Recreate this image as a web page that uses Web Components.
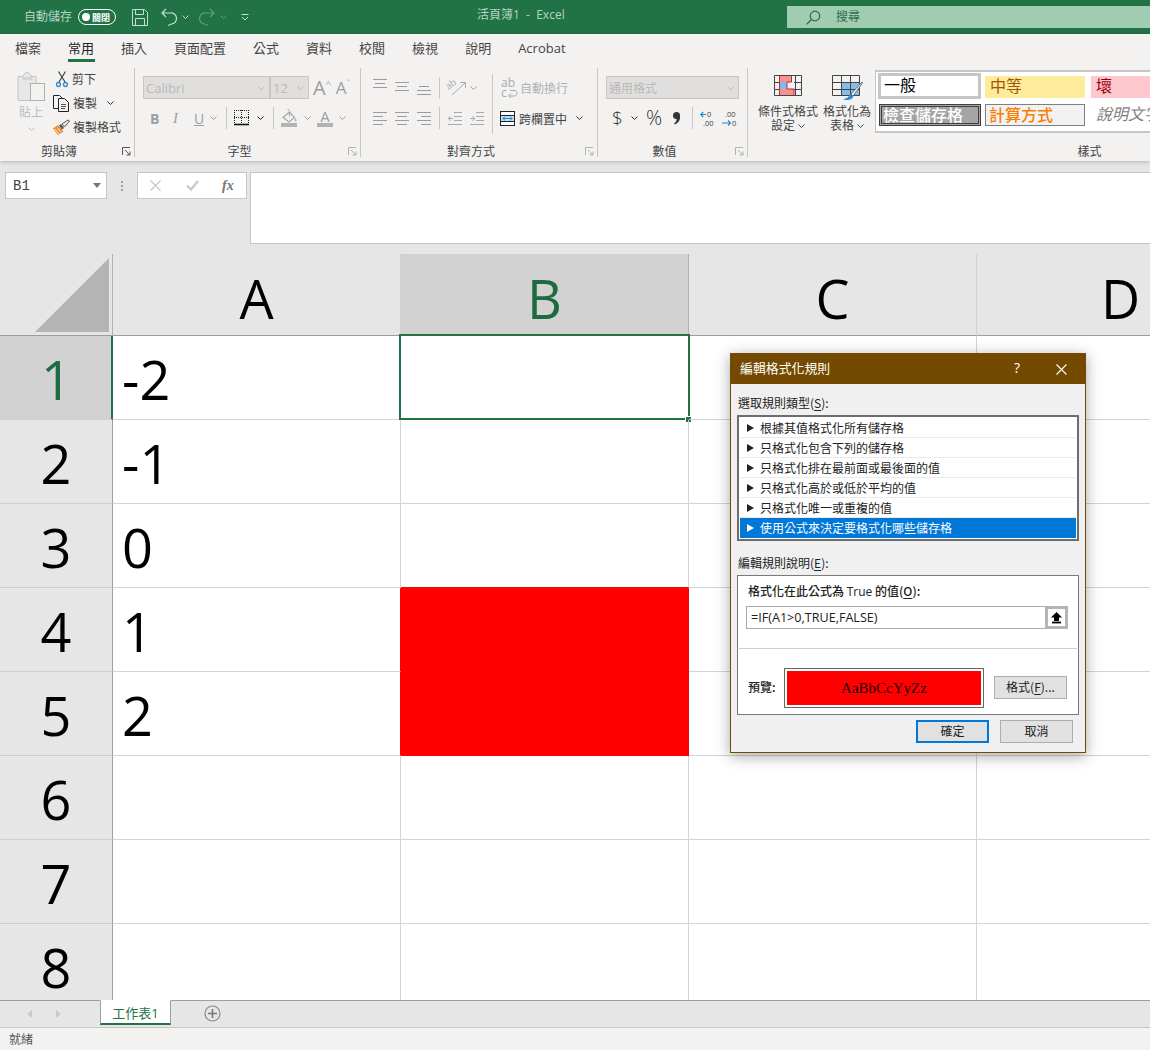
<!DOCTYPE html>
<html lang="zh-Hant">
<head>
<meta charset="utf-8">
<title>活頁簿1 - Excel</title>
<style>
  html, body { margin: 0; height: 100%; overflow: hidden; }
  body {
    width: 1150px;
    height: 1050px;
    display: flex;
    flex-direction: column;
    position: relative;
    font-family: "Open Sans", "Noto Sans CJK TC", sans-serif;
    font-size: 12px;
  }
</style>
</head>
<body>
<xl-titlebar></xl-titlebar>
<xl-ribbon></xl-ribbon>
<xl-formula-bar></xl-formula-bar>
<xl-sheet></xl-sheet>
<xl-sheet-tabs></xl-sheet-tabs>
<xl-status>就緒</xl-status>
<xl-rule-dialog></xl-rule-dialog>

<script>
const lines = (rows, color) =>
  rows.map(([x, y, w]) => `<path d="M${x} ${y}.5h${w}" stroke="${color}"/>`).join("");

const ICONS = {
  chev: [7, 4, `<path d="M.5.5l3 3 3-3" fill="none" stroke="currentColor"/>`],
  save: [16, 17, `<path d="M.5.5h12l3 3v13H.5zM3.5.5v5h8v-5M3.5 16.5v-7h9v7" fill="none" stroke="currentColor"/>`],
  undo: [16, 18, `<path d="M5 1L1 5l4 4M1 5h8.500a5.500 5.500 0 0 1 1 11L7 17.500" fill="none" stroke="currentColor" stroke-width="1.200"/>`],
  redo: [16, 18, `<path d="M11 1l4 4-4 4M15 5H6.500a5.500 5.500 0 0 0-1 11L9 17.500" fill="none" stroke="currentColor" stroke-width="1.200"/>`],
  custom: [8, 7, `<path d="M.5.500h7M1 3l3 3 3-3" fill="none" stroke="currentColor"/>`],
  search: [15, 15, `<circle cx="9" cy="6" r="4.800" fill="none" stroke="currentColor" stroke-width="1.200"/><path d="M5.500 9.500L.7 14.300" stroke="currentColor" stroke-width="1.300"/>`],
  paste: [28, 31, `<path d="M1 5.500h5l1-2.500 3-2 3 2 1 2.500h5v24H1z" fill="#e8e7e6" stroke="#c4c4c4"/><rect x="5.500" y="6" width="10" height="3" fill="#d4d4d4"/><rect x="13.500" y="12.500" width="14" height="17" fill="#f3f2f1" stroke="#b0b0b0"/>`],
  cut: [12, 17, `<path d="M3 11L9.500.5M9 11L2.500.5" stroke="#333" stroke-width="1.100" fill="none"/><circle cx="2.500" cy="13.500" r="2" fill="none" stroke="#2b88d8" stroke-width="1.300"/><circle cx="9.500" cy="13.500" r="2" fill="none" stroke="#2b88d8" stroke-width="1.300"/>`],
  copy: [17, 17, `<path d="M5.500 13.500H.5V.5h6l3 3" fill="none" stroke="#222"/><path d="M5.500 3.500h6l4 4v9h-10z" fill="#f3f2f1" stroke="#222"/><path d="M8 9.500h5M8 11.500h5M8 13.500h4" stroke="#555"/>`],
  brush: [17, 15, `<path d="M0 8.500l5 6.500 5.500-3.500L5 5z" fill="#ed8b2b"/><path d="M2 9l4 5M4.500 7.500l3 4.500" stroke="#fff" stroke-width=".8"/><path d="M6 5.500l3 4 2-1.500-3-4z" fill="#555"/><path d="M9 4l2.500 3 5-6L15 0z" fill="#f3f2f1" stroke="#444" stroke-width=".9"/>`],
  launcher: [9, 9, `<path d="M.5 8V.5H8M3 3l5 5M8 4.500V8H4.500" fill="none" stroke="currentColor"/>`],
  borders: [15, 17, `<path d="M0 .500h15M0 7.500h15M.5 0v14M14.500 0v14M7.500 0v14" stroke="#222" stroke-dasharray="1 1" fill="none"/><path d="M0 14.500h15" stroke="#111" stroke-width="1.600"/>`],
  fill: [17, 18, `<path d="M2 8.500l6.500-5.500 5 5.500-5.500 4.500z" fill="#f3f2f1" stroke="#a6a6a6" stroke-width="1.200"/><path d="M6.500.5c1-.5 2 .5 2 2v5" fill="none" stroke="#a6a6a6"/><path d="M14.500 9c1 1.500 1.500 2.500.5 3.200s-1.800-1.700-.5-3.200z" fill="#a6a6a6"/><rect y="14" width="16" height="4" fill="#b4b2b0"/>`],
  at1: [14, 10, lines([[0,0,14],[2,4,10],[0,8,14]], "#9c9c9c")],
  at2: [14, 10, lines([[0,0,14],[2,4,10],[0,8,14]], "#9c9c9c")],
  at3: [14, 10, lines([[2,0,10],[0,4,14],[0,8,14]], "#9c9c9c")],
  al: [14, 13, lines([[0,0,14],[0,4,10],[0,8,14],[0,12,10]], "#9c9c9c")],
  ac: [14, 13, lines([[0,0,14],[2,4,10],[0,8,14],[2,12,10]], "#9c9c9c")],
  ar: [14, 13, lines([[0,0,14],[4,4,10],[0,8,14],[4,12,10]], "#9c9c9c")],
  orient: [20, 17, `<text x="0" y="9" font-size="9.500" fill="#aaa" transform="rotate(-38 4 8)" font-family="Open Sans">ab</text><path d="M5 16L18 4M13 3.500h5.500V9" fill="none" stroke="#aaa"/>`],
  indL: [14, 13, lines([[6,0,8],[6,4,8],[6,8,8],[0,12,14]], "#aaa") + `<path d="M5 6.500H0M2.500 4L.5 6.500 2.500 9" fill="none" stroke="#aaa"/>`],
  indR: [14, 13, lines([[6,0,8],[6,4,8],[6,8,8],[0,12,14]], "#aaa") + `<path d="M0 6.500h5M2.500 4l2 2.500-2 2.500" fill="none" stroke="#aaa"/>`],
  wrap: [17, 20, `<text x="0" y="9" font-size="12" fill="#aaa" font-family="Open Sans">ab</text><text x="0" y="19" font-size="12" fill="#aaa" font-family="Open Sans">c</text><path d="M9 12.500h5c2.800 0 2.800 5.500-1 5.500H8M10 15.500L7.500 18l2.500 2" fill="none" stroke="#aaa"/>`],
  merge: [15, 15, `<rect x=".5" y=".5" width="14" height="14" fill="#fff" stroke="#222"/><rect x="1" y="4" width="13" height="7" fill="#bfe0f5"/><path d="M0 4.500h15M0 10.500h15" stroke="#222"/><path d="M3 7.500h9M5 5.500l-2 2 2 2M10 5.500l2 2-2 2" fill="none" stroke="#1e88d2"/>`],
  comma: [9, 13, `<circle cx="4.500" cy="3.500" r="3.500" fill="#333"/><path d="M8 4c.5 4-2 7.500-5.500 8.500l-.5-1c2-1 3-3 2.500-6z" fill="#333"/>`],
  decL: [15, 17, `<text x="7" y="7" font-size="7.500" fill="#444" font-family="Open Sans">0</text><text x="3" y="16" font-size="7.500" fill="#444" font-family="Open Sans">.00</text><path d="M6 4.500H.8M3.200 2L.8 4.500 3.200 7" fill="none" stroke="#1e88d2" stroke-width="1.100"/>`],
  decR: [15, 17, `<text x="3" y="7" font-size="7.500" fill="#444" font-family="Open Sans">.00</text><text x="10" y="16" font-size="7.500" fill="#444" font-family="Open Sans">0</text><path d="M0 13h8.500M6 10.500L8.500 13 6 15.500" fill="none" stroke="#1e88d2" stroke-width="1.100"/>`],
  cond: [28, 21, `<rect x="5" y="0" width="13" height="7" fill="#f98f92"/><rect x="5" y="7" width="8" height="7" fill="#7fbae8"/><rect x="5" y="14" width="15" height="7" fill="#f98f92"/><path d="M5.500.5h12v6.500h-4.500v7h7v6.500h-14.500z" fill="none" stroke="#c8282d"/><path d="M.5.500h27v20H.5zM.5 7.500h5M.5 14.500h5M20 7.500h8M20 14.500h8M21.500.500v20" fill="none" stroke="#444"/>`],
  table: [31, 26, `<rect x="9" y="7" width="19" height="14" fill="#84bde8"/><path d="M.5.500h27v20H.5zM.5 7.500h27M.5 14.500h27M9.500.500v20M18.500.500v20" fill="none" stroke="#444"/><path d="M30 7L19 19l2 2L30.500 8z" fill="#f3f2f1" stroke="#555" stroke-width=".8"/><path d="M18.500 19.500c-2 .5-1.500 3-4 3.500-1 .5-2 1-3.500 1 2.500 1.500 9 2 10.500-3z" fill="#2e8bd8"/>`],
  cross: [11, 11, `<path d="M.5.500l10 10M10.500.500l-10 10" stroke="#c8c8c8" stroke-width="1.300"/>`],
  check: [13, 11, `<path d="M1 5.500L5 9.500 12 1" fill="none" stroke="#c8c8c8" stroke-width="2.200"/>`],
  close: [11, 11, `<path d="M.5.500l10 10M10.500.500l-10 10" stroke="#fff" stroke-width="1.100"/>`],
  plus: [17, 17, `<circle cx="8.500" cy="8.500" r="7.500" fill="none" stroke="#8a8a8a" stroke-width="1.200"/><path d="M4 8.500h9M8.500 4v9" stroke="#777" stroke-width="1.600"/>`],
  up: [13, 13, `<path d="M6.500 1L12 6.500H9V10H4V6.500H1z" fill="#000"/><path d="M2 11.500h9" stroke="#000" stroke-width="1.800"/>`],
};

class XlIcon extends HTMLElement {
  constructor() {
    super();
    this.attachShadow({ mode: "open" });
  }
  connectedCallback() {
    const [w, h, body] = ICONS[this.getAttribute("name")];
    this.shadowRoot.innerHTML = `
      <style>:host{display:inline-flex;flex:none} svg{display:block;overflow:visible}</style>
      <svg width="${w}" height="${h}" viewBox="0 0 ${w} ${h}">${body}</svg>`;
  }
}
customElements.define("xl-icon", XlIcon);

class XlTitlebar extends HTMLElement {
  constructor() {
    super();
    this.attachShadow({ mode: "open" }).innerHTML = `
      <style>
        :host { display: flex; flex: none; align-items: center; height: 34px; background: #217346; color: #b3d5c2; font-family: "Noto Sans CJK TC", sans-serif; font-size: 12px; padding-left: 24px; box-sizing: border-box; overflow: hidden; }
        .auto { width: 48px; white-space: nowrap; margin-top: -4px; }
        .sw { display: flex; align-items: center; box-sizing: border-box; width: 38px; height: 16px; margin-left: 6px; border: 1px solid #fff; border-radius: 8px; color: #fff; font-size: 9px; font-weight: 700; padding-left: 3px; gap: 2px; line-height: 1; }
        .dot { width: 8px; height: 8px; border-radius: 50%; background: #fff; }
        .ic { color: #c4e0d0; display: flex; }
        .dim { color: #5f9e7e; }
        .title { position: absolute; left: 477px; top: 8px; line-height: 14px; white-space: nowrap; font-family: "Open Sans", "Noto Sans CJK TC", sans-serif; font-size: 12px; }
        .search { display: flex; align-items: center; margin-left: auto; width: 363px; height: 22px; background: #a0ccb2; color: #2d6e4c; box-sizing: border-box; padding-left: 19px; gap: 15px; }
        .search span { margin-top: -4px; }
      </style>
      <span class="auto">自動儲存</span>
      <span class="sw"><span class="dot"></span>關閉</span>
      <xl-icon class="ic" name="save" style="margin-left:16px"></xl-icon>
      <xl-icon class="ic" name="undo" style="margin-left:13px"></xl-icon>
      <xl-icon class="ic" name="chev" style="margin-left:5px"></xl-icon>
      <xl-icon class="ic dim" name="redo" style="margin-left:10px"></xl-icon>
      <xl-icon class="ic dim" name="chev" style="margin-left:5px"></xl-icon>
      <xl-icon class="ic" name="custom" style="margin-left:14px"></xl-icon>
      <span class="title">活頁簿1&nbsp; -&nbsp; Excel</span>
      <div class="search"><xl-icon name="search"></xl-icon><span>搜尋</span></div>`;
  }
}
customElements.define("xl-titlebar", XlTitlebar);

class XlGroup extends HTMLElement {
  constructor() {
    super();
    this.attachShadow({ mode: "open" });
  }
  connectedCallback() {
    const hasLauncher = this.hasAttribute("launcher");
    const launcher = hasLauncher
      ? `<xl-icon class="lc" name="launcher" style="color:${this.getAttribute("launcher")}"></xl-icon>` : "";
    this.shadowRoot.innerHTML = `
      <style>
        :host { display: flex; flex-direction: column; flex: none; position: relative; box-sizing: border-box; height: 89px; width: ${this.getAttribute("w")}px; border-right: 1px solid #c8c6c4; }
        .body { flex: 1; min-height: 0; }
        .label { height: 14px; line-height: 14px; margin-bottom: -2px; padding-right: ${hasLauncher ? 16 : 0}px; text-align: center; color: #444; font-size: 12px; }
        .lc { position: absolute; right: 3px; bottom: 1px; }
      </style>
      <div class="body"><slot></slot></div>
      <div class="label">${this.getAttribute("label")}</div>
      ${launcher}`;
  }
}
customElements.define("xl-group", XlGroup);

class XlRibbon extends HTMLElement {
  constructor() {
    super();
    this.attachShadow({ mode: "open" }).innerHTML = `
      <style>
        :host { display: block; flex: none; position: relative; z-index: 1; height: 127px; background: #f3f2f1; color: #444; box-shadow: 0 1px 4px rgba(0,0,0,.22); font-family: "Open Sans", "Noto Sans CJK TC", sans-serif; font-size: 12px; overflow: hidden; }
        .tabs { display: flex; gap: 27px; height: 32px; padding: 6px 0 0 15px; box-sizing: border-box; font-size: 13px; }
        .tab { position: relative; line-height: 17px; white-space: nowrap; }
        .tab.on { color: #222; }
        .tab.on::after { content: ""; position: absolute; left: 0; right: -1px; top: 19px; height: 3px; background: #217346; }
        .groups { display: flex; margin-top: 2px; }
        .row { display: flex; align-items: center; white-space: nowrap; }
        .off { color: #b1b1b1; }
        .lite { color: #9e9e9e; }
        .clip { display: flex; padding-left: 17px; margin-top: 3px; }
        .paste { display: flex; flex-direction: column; align-items: center; width: 28px; color: #bdbdbd; }
        .paste span { margin-top: 2px; line-height: 17px; font-size: 12px; }
        .paste xl-icon:last-child { margin-top: 6px; }
        .mini { margin: -4px 0 0 8px; }
        .mini .row { height: 24px; gap: 3px; }
        .box { box-sizing: border-box; display: flex; align-items: center; justify-content: space-between; height: 23px; background: #e1dfdd; border: 1px solid #c8c6c4; color: #b9b9b9; padding: 0 4px 0 2px; font-size: 13px; }
        .sep { flex: none; width: 1px; background: #c8c6c4; height: 22px; }
        .r1 { margin-top: 8px; height: 23px; }
        .r2 { margin-top: 8px; height: 22px; }
        .blk { display: flex; flex-direction: column; width: 131px; }
        .tall { height: 60px; margin-top: 6px; }
        .style-wrap { display: flex; height: 100%; }
        .cmd { display: flex; flex-direction: column; align-items: center; flex: none; line-height: 14px; text-align: center; white-space: nowrap; color: #444; }
        .cmd > xl-icon { margin-top: 7px; }
        .gal { flex: none; box-sizing: border-box; margin-top: 2px; height: 63px; width: 420px; background: #fff; border: 1px solid #c8c6c4; border-width: 2px 2px 2px 1px; padding: 1px 0 0 2px; display: grid; grid-template-columns: 103px 100px 100px; grid-template-rows: 26px 22px; gap: 5px 4px; font-family: "Noto Sans CJK TC", sans-serif; font-size: 16px; }
        .c { box-sizing: border-box; display: flex; align-items: center; padding: 0 0 4px 5px; line-height: 1; white-space: nowrap; }
      </style>
      <div class="tabs">
        <span class="tab">檔案</span><span class="tab on">常用</span><span class="tab">插入</span><span class="tab">頁面配置</span><span class="tab">公式</span><span class="tab">資料</span><span class="tab">校閱</span><span class="tab">檢視</span><span class="tab">說明</span><span class="tab">Acrobat</span>
      </div>
      <div class="groups">
        <xl-group w="135" label="剪貼簿" launcher="#555">
          <div class="clip">
            <div class="paste">
              <xl-icon name="paste"></xl-icon><span>貼上</span><xl-icon name="chev"></xl-icon>
            </div>
            <div class="mini">
              <div class="row"><xl-icon name="cut" style="margin-left:3px"></xl-icon><span style="margin-left:1px">剪下</span></div>
              <div class="row"><xl-icon name="copy"></xl-icon><span>複製</span><xl-icon name="chev" style="margin-left:7px;color:#333"></xl-icon></div>
              <div class="row"><xl-icon name="brush"></xl-icon><span>複製格式</span></div>
            </div>
          </div>
        </xl-group>

        <xl-group w="226" label="字型" launcher="#b1b1b1">
          <div class="row r1" style="padding-left:8px">
            <div class="box" style="width:127px;font-family:'Open Sans',sans-serif">Calibri<xl-icon name="chev"></xl-icon></div>
            <div class="box" style="width:39px;font-family:'Open Sans',sans-serif">12<xl-icon name="chev"></xl-icon></div>
            <span class="lite" style="margin-left:4px;font-size:20px">A</span><span class="lite" style="font-size:9px;margin:-8px 0 0 0">^</span>
            <span class="lite" style="margin-left:5px;font-size:17px">A</span><span class="lite" style="font-size:9px;margin:-8px 0 0 0">ˇ</span>
          </div>
          <div class="row r2 lite">
            <b style="margin-left:15px;width:11px;font-size:14px;font-family:'Open Sans',sans-serif">B</b>
            <i style="margin-left:12px;width:8px;font-size:15px;font-family:'Liberation Serif',serif">I</i>
            <u style="margin-left:13px;width:10px;font-size:14px">U</u>
            <xl-icon name="chev" style="margin-left:6px"></xl-icon>
            <div class="sep" style="margin-left:9px"></div>
            <xl-icon name="borders" style="margin-left:7px"></xl-icon>
            <xl-icon name="chev" style="margin-left:8px;color:#222"></xl-icon>
            <div class="sep" style="margin-left:9px"></div>
            <xl-icon name="fill" style="margin-left:7px"></xl-icon>
            <xl-icon name="chev" style="margin-left:6px"></xl-icon>
            <span style="margin-left:6px;width:16px;display:flex;flex-direction:column;align-items:center;line-height:14px;font-size:15px">A<span style="display:block;width:16px;height:4px;background:#b4b2b0"></span></span>
            <xl-icon name="chev" style="margin-left:6px"></xl-icon>
          </div>
        </xl-group>

        <xl-group w="237" label="對齊方式" launcher="#b1b1b1">
          <div class="row" style="align-items:flex-start">
            <div class="blk">
              <div class="row r1" style="padding-left:12px">
                <xl-icon name="at1" style="margin-top:-8px"></xl-icon>
                <xl-icon name="at2" style="margin:-2px 0 0 8px"></xl-icon>
                <xl-icon name="at3" style="margin:6px 0 0 8px"></xl-icon>
                <div class="sep" style="margin-left:8px"></div>
                <xl-icon name="orient" style="margin-left:7px"></xl-icon>
                <xl-icon name="chev" class="lite" style="margin-left:3px"></xl-icon>
              </div>
              <div class="row r2" style="padding-left:12px">
                <xl-icon name="al"></xl-icon>
                <xl-icon name="ac" style="margin-left:8px"></xl-icon>
                <xl-icon name="ar" style="margin-left:8px"></xl-icon>
                <div class="sep" style="margin-left:8px"></div>
                <xl-icon name="indL" style="margin-left:8px"></xl-icon>
                <xl-icon name="indR" style="margin-left:8px"></xl-icon>
              </div>
            </div>
            <div class="sep tall"></div>
            <div class="blk" style="width:100px">
              <div class="row r1 off" style="padding-left:8px">
                <xl-icon name="wrap"></xl-icon><span style="margin-left:2px">自動換行</span>
              </div>
              <div class="row r2" style="padding-left:7px">
                <xl-icon name="merge"></xl-icon><span style="margin:0 0 -1px 4px">跨欄置中</span>
                <xl-icon name="chev" style="margin-left:9px;color:#333"></xl-icon>
              </div>
            </div>
          </div>
        </xl-group>

        <xl-group w="150" label="數值" launcher="#b1b1b1">
          <div class="row r1" style="padding-left:8px">
            <div class="box" style="width:133px;font-size:12px">通用格式<xl-icon name="chev"></xl-icon></div>
          </div>
          <div class="row r2" style="color:#333">
            <span style="margin-left:14px;width:11px;font-size:19px;font-weight:300;line-height:22px">$</span>
            <xl-icon name="chev" style="margin-left:8px"></xl-icon>
            <span style="margin-left:8px;width:18px;font-size:20px;font-weight:300;line-height:22px">%</span>
            <xl-icon name="comma" style="margin-left:8px"></xl-icon>
            <div class="sep" style="margin-left:11px"></div>
            <xl-icon name="decL" style="margin-left:7px"></xl-icon>
            <xl-icon name="decR" style="margin-left:7px"></xl-icon>
          </div>
        </xl-group>

        <xl-group w="684" label="樣式">
          <div class="style-wrap">
            <div class="cmd" style="width:74px;margin-left:3px">
              <xl-icon name="cond"></xl-icon>
              <span style="margin-top:9px">條件式格式</span>
              <span class="row" style="gap:3px">設定<xl-icon name="chev"></xl-icon></span>
            </div>
            <div class="cmd" style="width:50px;margin:0 3px 0 -3px">
              <xl-icon name="table"></xl-icon>
              <span style="margin-top:4px">格式化為</span>
              <span class="row" style="gap:3px">表格<xl-icon name="chev"></xl-icon></span>
            </div>
            <div class="gal">
              <div class="c" style="border:3px solid #c6c6c6;padding:0 0 4px 3px;color:#000">一般</div>
              <div class="c" style="margin-top:3px;height:22px;background:#ffeb9c;color:#9c5700">中等</div>
              <div class="c" style="margin:3px 0 0 2px;height:22px;background:#ffc7ce;color:#9c0006">壞</div>
              <div class="c" style="margin-left:1px;background:#a5a5a5;color:#fff;border:3px double #3f3f3f;padding:0 0 2px 1px;font-weight:500">檢查儲存格</div>
              <div class="c" style="background:#f2f2f2;color:#fa7d00;border:1px solid #7f7f7f;padding:0 0 2px 3px;font-weight:500">計算方式</div>
              <div class="c" style="color:#7f7f7f;font-style:italic;margin-left:2px">說明文字</div>
            </div>
          </div>
        </xl-group>
      </div>`;
  }
}
customElements.define("xl-ribbon", XlRibbon);

class XlFormulaBar extends HTMLElement {
  constructor() {
    super();
    this.attachShadow({ mode: "open" }).innerHTML = `
      <style>
        :host { display: flex; flex: none; align-items: flex-start; box-sizing: border-box; height: 93px; padding: 11px 0 0 5px; background: #e6e6e6; }
        .f { box-sizing: border-box; height: 27px; background: #fff; border: 1px solid #c6c6c6; display: flex; align-items: center; }
        .name { width: 102px; padding: 0 5px 0 7px; justify-content: space-between; font: 14px "Liberation Mono", monospace; color: #444; }
        .tri { width: 0; height: 0; border: 4px solid transparent; border-top: 5px solid #777; border-bottom: 0; }
        .dots { width: 30px; display: flex; flex-direction: column; align-items: center; gap: 2px; padding-top: 9px; box-sizing: border-box; height: 27px; }
        .dots i { width: 2px; height: 2px; background: #a0a0a0; }
        .fx { width: 110px; padding-left: 12px; }
        .fx em { margin-left: 23px; font: italic 700 14px "Liberation Serif", serif; color: #777; }
        .input { flex: 1; height: 72px; margin-left: 3px; border-right: 0; }
      </style>
      <div class="f name">B1<span class="tri"></span></div>
      <div class="dots"><i></i><i></i><i></i></div>
      <div class="f fx"><xl-icon name="cross"></xl-icon><xl-icon name="check" style="margin-left:25px"></xl-icon><em>fx</em></div>
      <div class="f input"></div>`;
  }
}
customElements.define("xl-formula-bar", XlFormulaBar);

class XlSheet extends HTMLElement {
  constructor() {
    super();
    const cols = ["A", "B", "C", "D"];
    const vals = ["-2", "-1", "0", "1", "2"];
    let html = `<div class="corner"><svg width="112" height="81"><path d="M35 78L109 4V78z" fill="#b4b4b4"/></svg></div>`;
    for (const c of cols) html += `<div class="ch ${c === "B" ? "sel" : ""}">${c}</div>`;
    for (let r = 1; r <= 8; r++) {
      html += `<div class="rh ${r === 1 ? "sel" : ""}">${r}</div>`;
      for (const c of cols) {
        let cls = "cell";
        if (c === "B" && (r === 4 || r === 5)) cls += " red";
        if (c === "B" && r === 3) cls += " red-b";
        if (c === "A" && (r === 4 || r === 5)) cls += " red-r";
        const txt = c === "A" && r <= 5 ? vals[r - 1] : "";
        const inner = c === "B" && r === 1 ? `<div class="pick"><i></i></div>` : txt;
        html += `<div class="${cls}">${inner}</div>`;
      }
    }
    this.attachShadow({ mode: "open" }).innerHTML = `
      <style>
        :host { display: grid; flex: 1; min-height: 0; overflow: hidden; grid-template-columns: 113px 288px 288px 288px 288px; grid-auto-rows: 84px; grid-template-rows: 82px; background: #fff; font: 54px/1 "Open Sans", sans-serif; color: #000; }
        .corner { background: #e6e6e6; border-right: 1px solid #b1b1b1; border-bottom: 1px solid #9e9e9e; box-sizing: border-box; }
        .corner svg { display: block; }
        .ch, .rh { display: flex; align-items: center; justify-content: center; box-sizing: border-box; background: #e6e6e6; }
        .ch { border-right: 1px solid #d0d0d0; border-bottom: 1px solid #9e9e9e; padding-top: 6px; }
        .rh { border-right: 1px solid #9e9e9e; border-bottom: 1px solid #cfcfcf; padding-top: 3px; }
        .sel { background: #d2d2d2; color: #1f6b41; border-right-color: #b1b1b1; }
        .rh.sel { border-right: 2px solid #217346; padding-left: 2px; }
        .cell { position: relative; box-sizing: border-box; display: flex; align-items: center; padding: 3px 0 0 9px; border-right: 1px solid #d4d4d4; border-bottom: 1px solid #d4d4d4; white-space: nowrap; }
        .red { background: #f00; border-color: #f00; }
        .red-b { border-bottom-color: #f00; }
        .red-r { border-right-color: #f00; }
        .pick { position: absolute; left: -2px; top: -2px; right: -2px; bottom: -1px; border: 2px solid #217346; }
        .pick i { position: absolute; right: -3px; bottom: -4px; width: 5px; height: 5px; background: #217346; outline: 1px solid #fff; }
      </style>${html}`;
  }
}
customElements.define("xl-sheet", XlSheet);

class XlSheetTabs extends HTMLElement {
  constructor() {
    super();
    this.attachShadow({ mode: "open" }).innerHTML = `
      <style>
        :host { display: flex; flex: none; box-sizing: border-box; height: 28px; background: #e6e6e6; border-top: 1px solid #9e9e9e; border-bottom: 1px solid #c6c6c6; font-family: "Open Sans", "Noto Sans CJK TC", sans-serif; }
        .ar { width: 0; height: 0; margin-top: 9px; border: 4px solid transparent; }
        .tab { box-sizing: border-box; width: 71px; height: 25px; margin: -1px 0 0 39px; padding-top: 3px; background: #fff; border: 1px solid #9e9e9e; border-top-color: #fff; border-bottom: 2px solid #217346; color: #217346; font-size: 13px; line-height: 18px; text-align: center; }
        xl-icon { margin: 4px 0 0 33px; }
      </style>
      <span class="ar" style="margin-left:27px;border-right:5px solid #c8c8c8;border-left:0"></span>
      <span class="ar" style="margin-left:24px;border-left:5px solid #c8c8c8;border-right:0"></span>
      <div class="tab">工作表1</div>
      <xl-icon name="plus"></xl-icon>`;
  }
}
customElements.define("xl-sheet-tabs", XlSheetTabs);

class XlStatus extends HTMLElement {
  constructor() {
    super();
    this.attachShadow({ mode: "open" }).innerHTML = `
      <style>
        :host { display: flex; flex: none; align-items: center; box-sizing: border-box; height: 22px; padding: 0 0 2px 9px; background: #f3f2f1; color: #555; font-family: "Noto Sans CJK TC", sans-serif; font-size: 12px; }
      </style><slot></slot>`;
  }
}
customElements.define("xl-status", XlStatus);

class XlRuleDialog extends HTMLElement {
  constructor() {
    super();
    const rules = ["根據其值格式化所有儲存格", "只格式化包含下列的儲存格", "只格式化排在最前面或最後面的值", "只格式化高於或低於平均的值", "只格式化唯一或重複的值", "使用公式來決定要格式化哪些儲存格"];
    const items = rules.map((t, i) => `<div class="rule ${i === 5 ? "on" : ""}"><span class="arrow"></span>${t}</div>`).join("");
    this.attachShadow({ mode: "open" }).innerHTML = `
      <style>
        :host { position: absolute; left: 730px; top: 353px; width: 356px; height: 400px; box-sizing: border-box; display: flex; flex-direction: column; background: #f0f0f0; border: 1px solid #744a00; box-shadow: 0 3px 14px rgba(0,0,0,.35); font-family: "Noto Sans CJK TC", sans-serif; font-size: 12px; color: #222; }
        .head { display: flex; align-items: center; flex: none; box-sizing: border-box; height: 30px; background: #744a00; color: #fff; padding: 0 18px 3px 9px; font-size: 12.900px; }
        .head .q { margin-left: auto; margin-right: 36px; font-family: "Open Sans", sans-serif; font-size: 14px; }
        .head xl-icon { margin-top: 3px; }
        .lab { margin: 10px 0 0 7px; line-height: 18px; height: 18px; }
        u { text-underline-offset: 2px; }
        .list { box-sizing: border-box; margin: 3px 0 0 6px; width: 342px; height: 126px; padding: 1px; background: #fff; border: 2px solid #6d6d6d; }
        .rule { display: flex; align-items: center; height: 20px; box-sizing: border-box; padding-left: 7px; border-bottom: 1px solid #eaeaea; line-height: 1; white-space: nowrap; }
        .rule.on { background: #0078d7; color: #fff; border: 0; }
        .arrow { width: 0; height: 0; margin-right: 6px; border-left: 7px solid currentColor; border-top: 4px solid transparent; border-bottom: 4px solid transparent; }
        .lab2 { margin-top: 13px; }
        .desc { box-sizing: border-box; margin: 3px 0 0 6px; width: 342px; height: 140px; background: #fff; border: 1px solid #7a7a7a; display: flex; flex-direction: column; }
        .desc-t { margin: 6px 0 0 10px; height: 18px; line-height: 18px; font-weight: 500; }
        .desc-t span { font-family: "Open Sans", "Noto Sans CJK TC", sans-serif; }
        .ref { display: flex; box-sizing: border-box; margin: 6px 0 0 8px; width: 322px; height: 23px; border: 1px solid #ababab; }
        .ref span { flex: 1; padding-left: 4px; line-height: 21px; font-family: "Open Sans", sans-serif; font-size: 12.600px; white-space: nowrap; }
        .ref b { box-sizing: border-box; flex: none; display: flex; align-items: center; justify-content: center; width: 23px; margin: -1px -1px -1px 0; border: 3px solid #b4b4b4; background: #fff; }
        hr { margin: 19px 1px 0; width: auto; border: 0; border-top: 1px solid #cdcdcd; }
        .pv { display: flex; align-items: center; margin: 19px 0 0 10px; }
        .pv-t { width: 36px; font-weight: 500; margin-top: -3px; }
        .sample { box-sizing: border-box; width: 200px; height: 40px; border: 1px solid #666; padding: 2px; background: #fff; }
        .sample div { height: 100%; background: #f00; display: flex; align-items: center; justify-content: center; font: 15px "Liberation Serif", serif; color: #200; }
        button { box-sizing: border-box; width: 73px; height: 23px; padding: 0 0 2px; background: #e1e1e1; border: 1px solid #adadad; font: inherit; color: #222; }
        .foot { display: flex; gap: 11px; margin: 5px 0 0 185px; }
        .def { border: 2px solid #0078d7; }
      </style>
      <div class="head"><span>編輯格式化規則</span><span class="q">?</span><xl-icon name="close"></xl-icon></div>
      <div class="lab">選取規則類型(<u>S</u>):</div>
      <div class="list">${items}</div>
      <div class="lab lab2">編輯規則說明(<u>E</u>):</div>
      <div class="desc">
        <div class="desc-t">格式化在此公式為 <span>True</span> 的值(<u>O</u>):</div>
        <div class="ref"><span>=IF(A1&gt;0,TRUE,FALSE)</span><b><xl-icon name="up"></xl-icon></b></div>
        <hr>
        <div class="pv">
          <span class="pv-t">預覽:</span>
          <div class="sample"><div>AaBbCcYyZz</div></div>
          <button style="margin:-1px 0 0 10px">格式(<u>F</u>)...</button>
        </div>
      </div>
      <div class="foot"><button class="def">確定</button><button>取消</button></div>`;
  }
}
customElements.define("xl-rule-dialog", XlRuleDialog);
</script>
</body>
</html>
